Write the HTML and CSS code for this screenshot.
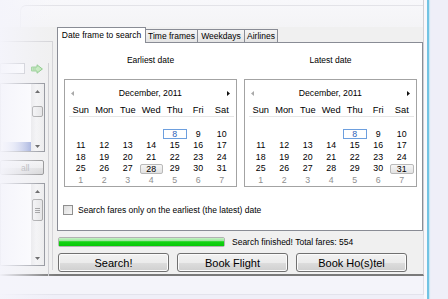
FILE: index.html
```html
<!DOCTYPE html>
<html lang="en">
<head>
    <meta charset="UTF-8">
    <meta name="viewport" content="width=device-width, initial-scale=1.0">
    <title>Fare search</title>
    <link rel="stylesheet" href="styles.css">
</head>
<body>

<div class="screen">
    <div class="window-col">
        <div class="window">
            <div class="titlebar"><div class="title-edge"></div></div>

            <div class="client">
                <!-- linke Spalte (abgeschnitten) -->
                <div class="side">
                    <div class="side-frame">
                        <div class="side-inner">
                            <div class="route-row">
                                <div class="textbox"></div>
                                <svg class="go-arrow" width="12" height="10" viewBox="0 0 12 10">
                                    <path d="M0.5 3 H6 V0.8 L11.4 5 L6 9.2 V7 H0.5 Z" fill="#b8e6ae" stroke="#6dbd69" stroke-width="0.9"/>
                                    <path d="M2.2 3.4 V6.6 M4 3.4 V6.6" stroke="#6dbd69" stroke-width="0.8"/>
                                </svg>
                            </div>

                            <div class="listbox list-one">
                                <div class="list-items"><div class="list-selected"></div></div>
                                <div class="scrollbar">
                                    <div class="sb-btn sb-up-one"><svg width="5" height="3"><path d="M0 3 L2.5 0 L5 3Z" fill="#3d3d3d"/></svg></div>
                                    <div class="sb-thumb thumb-one"></div>
                                    <div class="sb-space"></div>
                                    <div class="sb-btn sb-down-one"><svg width="5" height="3"><path d="M0 0 L2.5 3 L5 0Z" fill="#3d3d3d"/></svg></div>
                                </div>
                            </div>

                            <button class="side-btn">all</button>

                            <div class="listbox list-two">
                                <div class="list-items"></div>
                                <div class="scrollbar">
                                    <div class="sb-btn sb-up-two"><svg width="5" height="3"><path d="M0 3 L2.5 0 L5 3Z" fill="#3d3d3d"/></svg></div>
                                    <div class="sb-thumb thumb-two"><i></i><i></i><i></i></div>
                                    <div class="sb-space"></div>
                                    <div class="sb-btn sb-down-two"><svg width="5" height="3"><path d="M0 0 L2.5 3 L5 0Z" fill="#3d3d3d"/></svg></div>
                                </div>
                            </div>
                        </div>
                    </div>
                </div>

                <div class="main">
                    <div class="tabs">
                        <div class="tab active tab-date">Date frame to search</div>
                        <div class="tab tab-time">Time frames</div>
                        <div class="tab tab-week">Weekdays</div>
                        <div class="tab tab-air">Airlines</div>
                    </div>

                    <div class="tab-page">
                        <div class="calendars">
                            <div class="cal-col">
                                <div class="cal-label">Earliest date</div>
                                <div class="calendar">
                                    <div class="cal-head">
                                        <svg width="3" height="5"><path d="M3 0 L0 2.5 L3 5Z" fill="#a9a9a9"/></svg>
                                        <span class="cal-title">December, 2011</span>
                                        <svg width="3" height="5"><path d="M0 0 L3 2.5 L0 5Z" fill="#111"/></svg>
                                    </div>
                                    <div class="cal-days">
                                        <span>Sun</span><span>Mon</span><span>Tue</span><span>Wed</span><span>Thu</span><span>Fri</span><span>Sat</span>
                                    </div>
                                    <div class="cal-dates">
                                        <span></span><span></span><span></span><span></span><span></span><span></span><span></span>
                                        <span></span><span></span><span></span><span></span><span class="today">8</span><span>9</span><span>10</span>
                                        <span>11</span><span>12</span><span>13</span><span>14</span><span>15</span><span>16</span><span>17</span>
                                        <span>18</span><span>19</span><span>20</span><span>21</span><span>22</span><span>23</span><span>24</span>
                                        <span>25</span><span>26</span><span>27</span><span class="picked">28</span><span>29</span><span>30</span><span>31</span>
                                        <span class="other">1</span><span class="other">2</span><span class="other">3</span><span class="other">4</span><span class="other">5</span><span class="other">6</span><span class="other">7</span>
                                    </div>
                                </div>
                            </div>

                            <div class="cal-col">
                                <div class="cal-label">Latest date</div>
                                <div class="calendar">
                                    <div class="cal-head">
                                        <svg width="3" height="5"><path d="M3 0 L0 2.5 L3 5Z" fill="#a9a9a9"/></svg>
                                        <span class="cal-title">December, 2011</span>
                                        <svg width="3" height="5"><path d="M0 0 L3 2.5 L0 5Z" fill="#111"/></svg>
                                    </div>
                                    <div class="cal-days">
                                        <span>Sun</span><span>Mon</span><span>Tue</span><span>Wed</span><span>Thu</span><span>Fri</span><span>Sat</span>
                                    </div>
                                    <div class="cal-dates">
                                        <span></span><span></span><span></span><span></span><span></span><span></span><span></span>
                                        <span></span><span></span><span></span><span></span><span class="today">8</span><span>9</span><span>10</span>
                                        <span>11</span><span>12</span><span>13</span><span>14</span><span>15</span><span>16</span><span>17</span>
                                        <span>18</span><span>19</span><span>20</span><span>21</span><span>22</span><span>23</span><span>24</span>
                                        <span>25</span><span>26</span><span>27</span><span>28</span><span>29</span><span>30</span><span class="picked">31</span>
                                        <span class="other">1</span><span class="other">2</span><span class="other">3</span><span class="other">4</span><span class="other">5</span><span class="other">6</span><span class="other">7</span>
                                    </div>
                                </div>
                            </div>
                        </div>

                        <div class="only-date">
                            <span class="checkbox"></span>
                            <span>Search fares only on the earliest (the latest) date</span>
                        </div>
                    </div>

                    <div class="status-row">
                        <div class="progress"><div class="progress-fill"></div></div>
                        <span class="status">Search finished! Total fares: 554</span>
                    </div>

                    <div class="buttons">
                        <button class="btn">Search!</button>
                        <button class="btn">Book Flight</button>
                        <button class="btn">Book Ho(s)tel</button>
                    </div>
                </div>
            </div>
        </div>
        <div class="window-foot"></div>
    </div>
    <div class="frame-gap"></div>
    <div class="frame-edge"></div>
</div>

<!-- Ausblendung am linken Rand -->
<div class="fade"></div>

</body>
</html>
```

FILE: styles.css
```css
/* Grundlayout */
body {
    margin: 0;
    width: 448px;
    height: 299px;
    overflow: hidden;
    position: relative;
    background: #efeff8;
    font-family: "Liberation Sans", Arial, sans-serif;
    font-size: 8.5px;
    color: #000;
}

.screen {
    display: flex;
    height: 299px;
}

.window-col {
    width: 424px;
    display: flex;
    flex-direction: column;
}

.window {
    height: 276px;
    box-sizing: border-box;
    background: #f0f0f0;
    border-right: 1px solid #cfcfd4;
    border-bottom: 2px solid #7a7a7a;
}

.window-foot {
    height: 18px;
    background: #f4f4fa;
    border-right: 1px solid #dedee6;
    border-bottom: 1px solid #e3e3ec;
}

.frame-gap {
    width: 3px;
    background: #f8f8fc;
}

.frame-edge {
    width: 2px;
    background: #72c3e3;
    box-shadow: 1px 0 1px #c4e6f3;
}

.titlebar {
    height: 27px;
    box-sizing: border-box;
    padding-top: 5px;
    background: linear-gradient(#f8f8fb, #f4f4f6);
}

.title-edge {
    height: 22px;
    margin-left: 20px;
    border-top: 1px solid #e3e3e8;
    border-left: 1px solid #ececf0;
    border-top-left-radius: 6px;
}

.client {
    display: flex;
    height: 247px;
}

/* linke Spalte */
.side {
    width: 53px;
    padding-top: 14px;
}

.side-frame {
    height: 229px;
    box-sizing: border-box;
    padding-top: 8px;
    padding-right: 3px;
    border-top: 1px solid #d3d3d6;
    border-right: 1px solid #d3d3d6;
}

.side-inner {
    height: 218px;
    padding-right: 3px;
    border-right: 1px solid #cdcdd0;
}

.route-row {
    display: flex;
    align-items: center;
    margin-top: 13px;
    height: 11px;
}

.textbox {
    width: 25px;
    height: 11px;
    box-sizing: border-box;
    background: #fff;
    border: 1px solid #b5b7bd;
}

.go-arrow {
    margin-left: 6px;
}

.listbox {
    display: flex;
    width: 45px;
    box-sizing: border-box;
    background: #fff;
    border: 1px solid #8a8d94;
}

.list-one {
    height: 69px;
    margin-top: 9px;
}

.list-two {
    height: 83px;
    margin-top: 8px;
}

.list-items {
    flex: 1;
    display: flex;
    flex-direction: column;
    justify-content: flex-end;
    padding-bottom: 0;
}

.list-selected {
    height: 9px;
    margin-left: 2px;
    background: linear-gradient(to right, #f0f2fb, #c9d1ee 40%, #7f92cf);
}

.scrollbar {
    width: 13px;
    display: flex;
    flex-direction: column;
    align-items: center;
    background: linear-gradient(to right, #e6e6e6, #f4f4f4 40%, #ececec);
}

.sb-btn {
    display: flex;
    align-items: center;
    justify-content: center;
    width: 13px;
}

.sb-up-one { height: 14px; }
.sb-down-one { height: 10px; }
.sb-up-two { height: 15px; }
.sb-down-two { height: 14px; }

.sb-space {
    flex: 1;
}

.sb-thumb {
    width: 11px;
    box-sizing: border-box;
    border: 1px solid #9a9a9a;
    border-radius: 2px;
    background: linear-gradient(to right, #f3f3f3, #e2e2e2);
    display: flex;
    flex-direction: column;
    align-items: center;
    justify-content: center;
    gap: 1px;
}

.thumb-one {
    height: 11px;
    margin-top: 8px;
}

.thumb-two {
    height: 22px;
}

.sb-thumb i {
    display: block;
    width: 5px;
    height: 1px;
    background: #8a8a8a;
}

.side-btn {
    display: block;
    width: 44px;
    height: 15px;
    margin: 8px 0 0;
    padding: 0 0 0 20px;
    text-align: left;
    font-family: "Liberation Sans", Arial, sans-serif;
    font-size: 8.5px;
    color: #8a8a8a;
    border: 1px solid #8a8a8a;
    border-radius: 2px;
    background: linear-gradient(#f4f4f4 0%, #ececec 50%, #dedede 51%, #d2d2d2 100%);
}

/* Hauptbereich */
.main {
    width: 366px;
    margin-left: 4px;
}

.tabs {
    display: flex;
    align-items: flex-end;
    height: 15px;
    position: relative;
    z-index: 1;
}

.tab {
    height: 13px;
    box-sizing: border-box;
    margin-left: -1px;
    border: 1px solid #898c95;
    border-bottom: none;
    background: linear-gradient(#f5f5f5, #e4e4e4);
    text-align: center;
    line-height: 12px;
    white-space: nowrap;
}

.tab.active {
    height: 16px;
    margin-left: 0;
    margin-bottom: -1px;
    background: #fff;
    line-height: 15px;
    position: relative;
    z-index: 2;
}

.tab-date { width: 89px; }
.tab-time { width: 53px; }
.tab-week { width: 48px; }
.tab-air { width: 34px; }

.tab-page {
    height: 189px;
    box-sizing: border-box;
    background: #fff;
    border: 1px solid #898c95;
    padding: 11px 4px 0 6px;
}

.calendars {
    display: flex;
    gap: 7px;
}

.cal-label {
    height: 12px;
    line-height: 12px;
    text-align: center;
    margin-bottom: 13px;
}

.calendar {
    width: 173px;
    height: 108px;
    box-sizing: border-box;
    border: 1px solid #a3a3a3;
    padding: 6px 2px 0 4px;
}

.cal-head {
    display: flex;
    align-items: center;
    width: 164.5px;
    height: 14px;
    box-sizing: border-box;
    padding: 0 4px 0 2px;
}

.cal-title {
    flex: 1;
    text-align: center;
    font-size: 8.7px;
}

.cal-days,
.cal-dates {
    display: grid;
    grid-template-columns: repeat(7, 23.5px);
    text-align: center;
}

.cal-days {
    margin-top: 5px;
    height: 11px;
    line-height: 11px;
    font-size: 9.3px;
    border-bottom: 1px solid #e6e6e6;
}

.cal-dates {
    grid-auto-rows: 11.5px;
    font-size: 8.8px;
    line-height: 11.5px;
}

.cal-dates .other {
    color: #8e8e8e;
}

.cal-dates .today,
.cal-dates .picked {
    height: 10px;
    margin-top: 0.5px;
    box-sizing: border-box;
    line-height: 8.5px;
}

.cal-dates .today {
    border: 1px solid #6d9fde;
    color: #2f63b8;
}

.cal-dates .picked {
    border: 1px solid #b9b9b9;
    border-radius: 2px;
    background: linear-gradient(#f6f6f6, #e2e2e2);
}

.only-date {
    display: flex;
    align-items: center;
    margin-top: 18px;
    margin-left: -1px;
    height: 10px;
}

.checkbox {
    width: 10px;
    height: 10px;
    box-sizing: border-box;
    border: 1px solid #8f8f8f;
    background: linear-gradient(135deg, #dcdcdc, #f6f6f6);
    margin-right: 5px;
}

.status-row {
    display: flex;
    align-items: center;
    margin-top: 6px;
    height: 10px;
}

.progress {
    width: 167px;
    height: 10px;
    box-sizing: border-box;
    margin-left: 1px;
    border: 1px solid #b2b2b2;
    border-radius: 2px;
    background: #e6e6e6;
}

.progress-fill {
    height: 100%;
    background: linear-gradient(#c6f3c6 0%, #93e493 40%, #14d414 45%, #08c808 100%);
}

.status {
    margin-left: 7px;
}

.buttons {
    display: flex;
    gap: 8px;
    margin-top: 6px;
    margin-left: 1px;
}

.btn {
    width: 111px;
    height: 19px;
    padding: 0;
    font-family: "Liberation Sans", Arial, sans-serif;
    font-size: 11px;
    color: #000;
    border: 1px solid #707070;
    border-radius: 3px;
    background: linear-gradient(#f2f2f2 0%, #ebebeb 50%, #dddddd 51%, #cfcfcf 100%);
    box-shadow: inset 0 0 0 1px #fbfbfb;
}

/* Ueberblendung links */
.fade {
    position: absolute;
    left: 0;
    top: 0;
    width: 56px;
    height: 299px;
    background: linear-gradient(to right,
        rgba(244, 244, 251, 0.97) 0,
        rgba(244, 244, 251, 0.75) 12px,
        rgba(244, 244, 251, 0.45) 28px,
        rgba(244, 244, 251, 0.15) 44px,
        rgba(244, 244, 251, 0) 56px);
    pointer-events: none;
}
```
